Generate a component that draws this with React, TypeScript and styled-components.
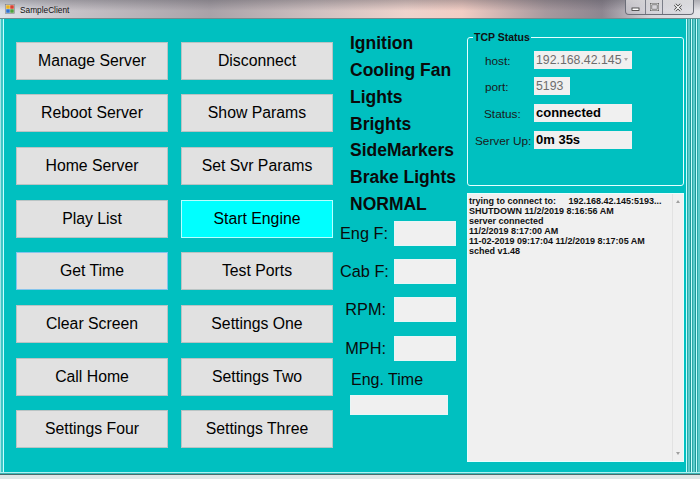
import React from "react";
import styled, { createGlobalStyle } from "styled-components";

const Global = createGlobalStyle`
  html, body { margin: 0; padding: 0; background: #d6dcdc; }
  body { font-family: "Liberation Sans", Arial, sans-serif; }
  * { box-sizing: border-box; }
`;

const Window = styled.div`
  width: 700px;
  height: 479px;
  display: flex;
  flex-direction: column;
  overflow: hidden;
  background: #d6dcdc;
`;

const TitleBar = styled.div`
  height: 19px;
  flex: none;
  display: flex;
  align-items: flex-start;
  border-bottom: 1px solid #6f8c8e;
  background:
    linear-gradient(180deg, rgba(70, 70, 80, 0.35) 0%, rgba(255, 255, 255, 0) 60%),
    linear-gradient(90deg, #dfe2e8 0%, #c8c3c8 10%, #a9a2a8 30%, #cfc0c0 45%, #efd3cc 58%, #f2cdc4 66%, #a8999e 78%, #8e8690 86%, #d7d5da 93%, #e6e6ea 100%);
`;

const AppIcon = styled.svg`
  width: 10px;
  height: 10px;
  margin: 4px 0 0 5px;
  flex: none;
`;

const Title = styled.span`
  font-size: 8.3px;
  color: #111;
  margin: 5px 0 0 5px;
  line-height: 10px;
`;

const Spacer = styled.div`
  flex: 1;
`;

const Controls = styled.div`
  display: flex;
  height: 15px;
  margin-right: 6px;
  border: 1px solid #6b6e78;
  border-top: none;
  border-radius: 0 0 4px 4px;
  overflow: hidden;
`;

const CtlButton = styled.div<{ $w: number }>`
  width: ${(p) => p.$w}px;
  height: 100%;
  display: flex;
  align-items: center;
  justify-content: center;
  background: linear-gradient(180deg, rgba(255, 255, 255, 0.55), rgba(200, 200, 210, 0.35));
  & + & {
    border-left: 1px solid #7b7e88;
  }
`;

const FrameRow = styled.div`
  flex: 1;
  display: flex;
  min-height: 0;
`;

const LeftEdge = styled.div`
  width: 4px;
  flex: none;
  background: linear-gradient(90deg, #9fe6e6 0 1px, #3fc6c6 1px 3px, #c8ffff 3px 4px);
`;

const RightEdge = styled.div`
  width: 14px;
  flex: none;
  background: repeating-linear-gradient(90deg, #c8ffff 0 1px, #2aa8a8 1px 2px, #5ccaca 2px 4px, #1e9a9a 4px 5px);
`;

const BottomEdge = styled.div`
  height: 7px;
  flex: none;
  background: linear-gradient(180deg, #aef2f2 0 1px, #3ab8b8 1px 2px, #4a6a6a 2px 3px, #dfe6e6 3px 100%);
`;

const Client = styled.div`
  width: 682px;
  flex: none;
  background: #00c0c0;
  display: flex;
  align-items: flex-start;
  padding: 0 2px 0 12px;
`;

const ButtonGrid = styled.div`
  margin-top: 22.5px;
  display: grid;
  grid-template-columns: 152px 152px;
  grid-auto-rows: 38px;
  column-gap: 13px;
  row-gap: 14.7px;
`;

const WinButton = styled.button<{ $active?: boolean; $focused?: boolean }>`
  font-family: "Liberation Sans", Arial, sans-serif;
  font-size: 15.8px;
  color: #000;
  padding: 0;
  margin: 0;
  background: ${(p) => (p.$active ? "#00ffff" : "#e1e1e1")};
  border: 1px solid ${(p) => (p.$active ? "#b8ffff" : p.$focused ? "#84c4ec" : "#b9c4c4")};
  display: flex;
  align-items: center;
  justify-content: center;
`;

const MiddleColumn = styled.div`
  margin-left: 7px;
  width: 127px;
  flex: none;
  display: flex;
  flex-direction: column;
`;

const StatusList = styled.div`
  margin-top: 11.3px;
  padding-left: 10px;
  display: flex;
  flex-direction: column;
`;

const StatusItem = styled.div`
  font-size: 17.5px;
  font-weight: bold;
  line-height: 26.8px;
  color: #0a0a0a;
  white-space: nowrap;
`;

const Gauges = styled.div`
  margin-top: 2.8px;
  display: grid;
  grid-template-columns: 46px 62px;
  grid-auto-rows: 25px;
  column-gap: 8px;
  row-gap: 13.4px;
  align-items: center;
`;

const GaugeLabel = styled.div`
  font-size: 16.3px;
  color: #0a0a0a;
  text-align: right;
  white-space: nowrap;
`;

const Field = styled.div<{ $w: number; $h: number }>`
  width: ${(p) => p.$w}px;
  height: ${(p) => p.$h}px;
  background: #f0f0f0;
  border: 1px solid #e8f6f6;
`;

const EngTimeLabel = styled.div`
  margin-top: 10px;
  padding-left: 11px;
  font-size: 16px;
  line-height: 18.4px;
  color: #0a0a0a;
`;

const EngTimeField = styled(Field)`
  margin-top: 6px;
  margin-left: 10px;
`;

const RightColumn = styled.div`
  width: 217px;
  flex: none;
  margin-top: 18.3px;
  display: flex;
  flex-direction: column;
  gap: 7.6px;
`;

const GroupBox = styled.div`
  position: relative;
  height: 148.4px;
  border: 1px solid #e6ffff;
  border-radius: 3px;
  padding-top: 12.5px;
  display: grid;
  grid-template-columns: 62px auto;
  grid-auto-rows: 18px;
  column-gap: 4px;
  row-gap: 8.6px;
  align-content: start;
  align-items: center;
`;

const GroupTitle = styled.div`
  position: absolute;
  top: -7px;
  left: 5px;
  padding: 0 1px;
  background: #00c0c0;
  font-size: 10.5px;
  font-weight: bold;
  line-height: 12px;
  color: #111;
`;

const TcpLabel = styled.div<{ $indent: number }>`
  font-size: 11.8px;
  color: #1a1a1a;
  white-space: nowrap;
  padding-top: 2px;
  padding-left: ${(p) => p.$indent}px;
`;

const TcpField = styled.div<{ $w: number; $bold?: boolean }>`
  width: ${(p) => p.$w}px;
  height: 18px;
  background: #f0f0f0;
  display: flex;
  align-items: center;
  justify-content: space-between;
  padding: 0 4px 0 2px;
  font-size: ${(p) => (p.$bold ? "13px" : "12.3px")};
  font-weight: ${(p) => (p.$bold ? "bold" : "normal")};
  color: ${(p) => (p.$bold ? "#000" : "#6d6d6d")};
  white-space: nowrap;
`;

const ComboArrow = styled.span`
  width: 0;
  height: 0;
  border-left: 2.5px solid transparent;
  border-right: 2.5px solid transparent;
  border-top: 3px solid #a8a8a8;
`;

const LogBox = styled.div`
  height: 268.4px;
  background: #f0f0f0;
  border: 1px solid #e6ffff;
  display: flex;
`;

const LogText = styled.div`
  flex: 1;
  padding: 2px 0 0 1px;
  font-size: 9px;
  font-weight: bold;
  line-height: 10px;
  color: #111;
  white-space: pre;
  overflow: hidden;
`;

const ScrollBar = styled.div`
  width: 11px;
  flex: none;
  border-left: 1px solid #e2e2e2;
  display: flex;
  flex-direction: column;
  justify-content: space-between;
  align-items: center;
  padding: 6px 0 6px;
`;

const Arrow = styled.span<{ $up?: boolean }>`
  width: 0;
  height: 0;
  border-left: 2.5px solid transparent;
  border-right: 2.5px solid transparent;
  ${(p) => (p.$up ? "border-bottom: 3px solid #a0a0a0;" : "border-top: 3px solid #a0a0a0;")}
`;

const buttons: { label: string; active?: boolean; focused?: boolean }[] = [
  { label: "Manage Server" },
  { label: "Disconnect" },
  { label: "Reboot Server" },
  { label: "Show Params" },
  { label: "Home Server" },
  { label: "Set Svr Params" },
  { label: "Play List" },
  { label: "Start Engine", active: true },
  { label: "Get Time", focused: true },
  { label: "Test Ports" },
  { label: "Clear Screen" },
  { label: "Settings One" },
  { label: "Call Home" },
  { label: "Settings Two" },
  { label: "Settings Four" },
  { label: "Settings Three" },
];

const statuses = ["Ignition", "Cooling Fan", "Lights", "Brights", "SideMarkers", "Brake Lights", "NORMAL"];
const gauges = ["Eng F:", "Cab F:", "RPM:", "MPH:"];

const logLines = [
  "trying to connect to:     192.168.42.145:5193...",
  "SHUTDOWN 11/2/2019 8:16:56 AM",
  "server connected",
  "11/2/2019 8:17:00 AM",
  "11-02-2019 09:17:04 11/2/2019 8:17:05 AM",
  "sched v1.48",
];

export default function App() {
  return (
    <>
      <Global />
      <Window>
        <TitleBar>
          <AppIcon viewBox="0 0 10 10">
            <rect x="0.5" y="0.5" width="9" height="9" fill="#f4f4f4" stroke="#7a7a7a" strokeWidth="0.6" />
            <rect x="1.2" y="1.2" width="3.6" height="3.6" fill="#e8b020" />
            <rect x="5.2" y="1.2" width="3.6" height="3.6" fill="#d84030" />
            <rect x="1.2" y="5.2" width="3.6" height="3.6" fill="#3070d0" />
            <rect x="5.2" y="5.2" width="3.6" height="3.6" fill="#50a040" />
          </AppIcon>
          <Title>SampleClient</Title>
          <Spacer />
          <Controls>
            <CtlButton $w={19}>
              <svg width="9" height="8" viewBox="0 0 9 8">
                <rect x="1" y="5" width="7" height="2.4" fill="#fff" stroke="#333" strokeWidth="0.8" />
              </svg>
            </CtlButton>
            <CtlButton $w={17}>
              <svg width="9" height="8" viewBox="0 0 9 8">
                <rect x="1" y="1" width="7" height="6" fill="none" stroke="#333" strokeWidth="2.2" />
                <rect x="1" y="1" width="7" height="6" fill="none" stroke="#fff" strokeWidth="1" />
              </svg>
            </CtlButton>
            <CtlButton $w={31}>
              <svg width="10" height="9" viewBox="0 0 10 9">
                <path d="M2 1.5 L8 7.5 M8 1.5 L2 7.5" stroke="#333" strokeWidth="2.6" />
                <path d="M2 1.5 L8 7.5 M8 1.5 L2 7.5" stroke="#fff" strokeWidth="1.3" />
              </svg>
            </CtlButton>
          </Controls>
        </TitleBar>
        <FrameRow>
          <LeftEdge />
          <Client>
            <ButtonGrid>
              {buttons.map((b) => (
                <WinButton key={b.label} $active={b.active} $focused={b.focused}>
                  {b.label}
                </WinButton>
              ))}
            </ButtonGrid>
            <MiddleColumn>
              <StatusList>
                {statuses.map((s) => (
                  <StatusItem key={s}>{s}</StatusItem>
                ))}
              </StatusList>
              <Gauges>
                {gauges.map((g) => (
                  <React.Fragment key={g}>
                    <GaugeLabel>{g}</GaugeLabel>
                    <Field $w={62} $h={25} />
                  </React.Fragment>
                ))}
              </Gauges>
              <EngTimeLabel>Eng. Time</EngTimeLabel>
              <EngTimeField $w={98} $h={20} />
            </MiddleColumn>
            <RightColumn>
              <GroupBox>
                <GroupTitle>TCP Status</GroupTitle>
                <TcpLabel $indent={17}>host:</TcpLabel>
                <TcpField $w={98}>
                  <span>192.168.42.145</span>
                  <ComboArrow />
                </TcpField>
                <TcpLabel $indent={17}>port:</TcpLabel>
                <TcpField $w={36}>5193</TcpField>
                <TcpLabel $indent={16}>Status:</TcpLabel>
                <TcpField $w={98} $bold>
                  connected
                </TcpField>
                <TcpLabel $indent={7}>Server Up:</TcpLabel>
                <TcpField $w={98} $bold>
                  0m 35s
                </TcpField>
              </GroupBox>
              <LogBox>
                <LogText>{logLines.join("\n")}</LogText>
                <ScrollBar>
                  <Arrow $up />
                  <Arrow />
                </ScrollBar>
              </LogBox>
            </RightColumn>
          </Client>
          <RightEdge />
        </FrameRow>
        <BottomEdge />
      </Window>
    </>
  );
}
